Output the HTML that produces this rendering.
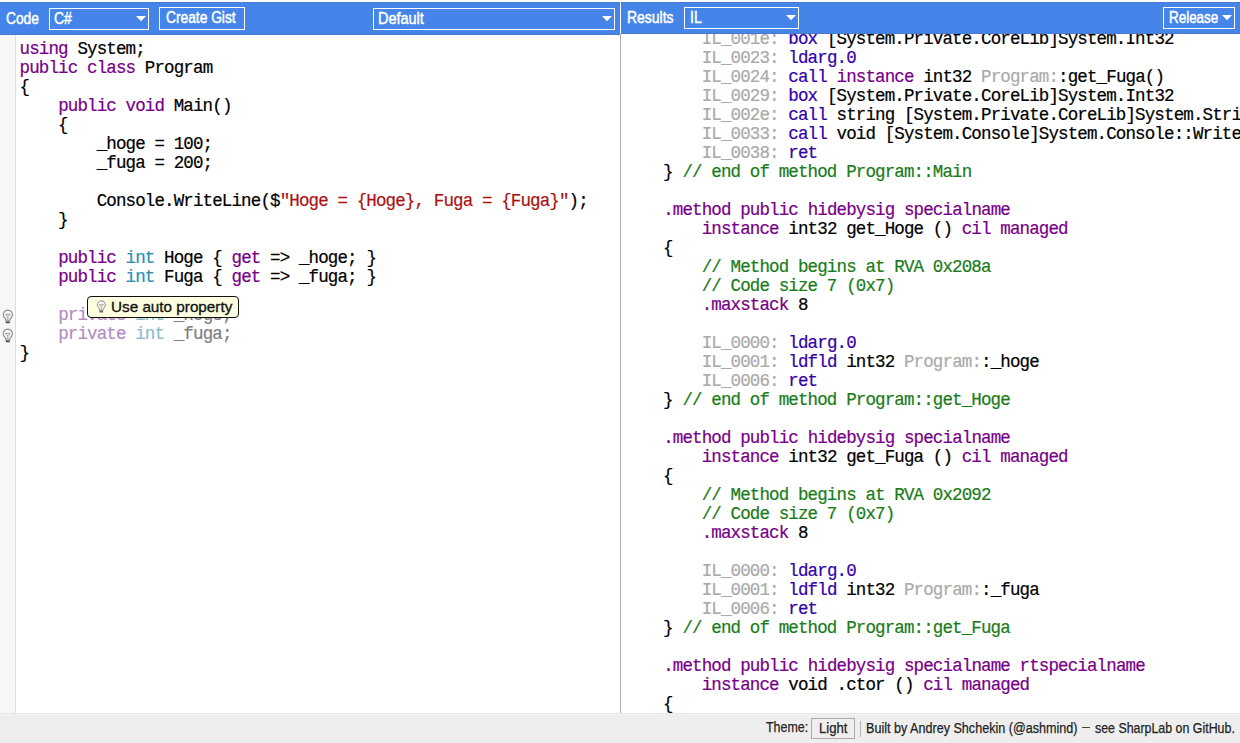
<!DOCTYPE html>
<html><head><meta charset="utf-8">
<style>
html,body{margin:0;padding:0;}
body{width:1240px;height:743px;overflow:hidden;position:relative;background:#fff;font-family:"Liberation Sans",sans-serif;}
.abs{position:absolute;}
.hdrL{left:0;top:2px;width:620px;height:33px;background:#4585ea;box-shadow:inset 0 1px 0 #4a7bd2,inset 0 -1px 0 #4a78cc;}
.hdrR{left:621px;top:2px;width:619px;height:32px;background:#4585ea;box-shadow:inset 0 1px 0 #4a7bd2,inset 0 -1px 0 #4a78cc;}
.divc{left:620px;top:34px;width:1px;height:679px;background:#aaa;}
.gut{left:0;top:35px;width:15px;height:678px;background:#f7f7f7;border-right:1px solid #ddd;}
.foot{left:0;top:713px;width:1240px;height:30px;background:#eee;}
.lbl{color:#fff;font-size:17px;-webkit-text-stroke:0.5px #fff;white-space:nowrap;transform-origin:0 0;}
.box{border:1px solid #fff;box-sizing:border-box;}
.tri{width:0;height:0;border-left:4.5px solid transparent;border-right:4.5px solid transparent;border-top:5px solid #fff;}
pre{margin:0;font-family:"Liberation Mono",monospace;font-size:17.5px;letter-spacing:-0.87px;line-height:19px;-webkit-text-stroke:0.2px currentColor;color:#000;white-space:pre;}
.k{color:#708;}
.t{color:#2b91af;}
.s{color:#a11;}
.b{color:#30a;}
.c{color:#187c18;}
.g{color:#aaa;}
.dim{color:#808080;}.dim .k{color:#b38cc2;}.dim .t{color:#8dbccd;}
.ft{font-size:15px;color:#222;-webkit-text-stroke:0.25px #222;white-space:nowrap;transform-origin:0 0;}
.tip{box-sizing:border-box;border:1px solid #111;border-radius:4px;background:#fdfddf;}
</style></head><body>
<div class="abs hdrL"></div>
<div class="abs hdrR"></div>
<div class="abs divc"></div>
<div class="abs gut"></div>

<svg class="abs" style="left:0;top:307.5px" width="16" height="17" viewBox="0 0 16 17"><g fill="none" stroke="#8a8a8a" stroke-width="1.1"><path d="M5.4,10.6 A4.6,4.6 0 1 1 10.2,10.6 L9.6,13.2 H6 Z" fill="#f4f4f4"/><path d="M5.5,6.4 H10.1 L7.8,8.9 Z M7.8,8.9 V12.2" stroke="#9a9a9a" stroke-width="0.9"/><path d="M6.2,12.4 H9.4" stroke="#999" stroke-width="0.8"/></g><rect x="5.8" y="13.8" width="4" height="1.4" fill="#444"/></svg>
<svg class="abs" style="left:0;top:326.5px" width="16" height="17" viewBox="0 0 16 17"><g fill="none" stroke="#8a8a8a" stroke-width="1.1"><path d="M5.4,10.6 A4.6,4.6 0 1 1 10.2,10.6 L9.6,13.2 H6 Z" fill="#f4f4f4"/><path d="M5.5,6.4 H10.1 L7.8,8.9 Z M7.8,8.9 V12.2" stroke="#9a9a9a" stroke-width="0.9"/><path d="M6.2,12.4 H9.4" stroke="#999" stroke-width="0.8"/></g><rect x="5.8" y="13.8" width="4" height="1.4" fill="#444"/></svg>
<!-- header left -->
<div class="abs lbl" style="left:5.9px;top:9px;transform:scaleX(.81)">Code</div>
<div class="abs box" style="left:49px;top:8px;width:100px;height:22px;"></div>
<div class="abs lbl" style="left:53.9px;top:9px;transform:scaleX(.82)">C#</div>
<svg class="abs" style="left:136px;top:16px" width="10" height="6"><polygon points="0,0 10,0 5,5.3" fill="#fff"/></svg>
<div class="abs box" style="left:159px;top:7px;width:86px;height:23px;"></div>
<div class="abs lbl" style="left:166.1px;top:8px;transform:scaleX(.81)">Create Gist</div>
<div class="abs box" style="left:373px;top:8px;width:242px;height:22px;"></div>
<div class="abs lbl" style="left:378.2px;top:9px;transform:scaleX(.85)">Default</div>
<svg class="abs" style="left:602px;top:16px" width="10" height="6"><polygon points="0,0 10,0 5,5.3" fill="#fff"/></svg>

<!-- header right -->
<div class="abs lbl" style="left:627.1px;top:8px;transform:scaleX(.82)">Results</div>
<div class="abs box" style="left:684px;top:7px;width:115px;height:22px;"></div>
<div class="abs lbl" style="left:689.7px;top:8px;transform:scaleX(.83)">IL</div>
<svg class="abs" style="left:786px;top:15px" width="10" height="6"><polygon points="0,0 10,0 5,5.3" fill="#fff"/></svg>
<div class="abs box" style="left:1163px;top:7px;width:72px;height:22px;"></div>
<div class="abs lbl" style="left:1168.9px;top:8px;transform:scaleX(.79)">Release</div>
<svg class="abs" style="left:1222px;top:15px" width="10" height="6"><polygon points="0,0 10,0 5,5.3" fill="#fff"/></svg>

<!-- left code -->
<pre class="abs" id="codeL" style="left:19.6px;top:39.7px;"><span class="k">using</span> System;
<span class="k">public</span> <span class="k">class</span> Program
{
    <span class="k">public</span> <span class="k">void</span> Main()
    {
        _hoge = 100;
        _fuga = 200;

        Console.WriteLine($<span class="s">"Hoge = {Hoge}, Fuga = {Fuga}"</span>);
    }

    <span class="k">public</span> <span class="t">int</span> Hoge { <span class="k">get</span> =&gt; _hoge; }
    <span class="k">public</span> <span class="t">int</span> Fuga { <span class="k">get</span> =&gt; _fuga; }

<span class="dim">    <span class="k">private</span> <span class="t">int</span> _hoge;</span>
<span class="dim">    <span class="k">private</span> <span class="t">int</span> _fuga;</span>
}</pre>

<!-- right code -->
<div class="abs" style="left:621px;top:34px;width:619px;height:679px;overflow:hidden;"><pre class="abs" id="codeR" style="left:3.6px;top:-4.3px;">        <span class="g">IL_001e:</span> <span class="b">box</span> [System.Private.CoreLib]System.Int32
        <span class="g">IL_0023:</span> <span class="b">ldarg.0</span>
        <span class="g">IL_0024:</span> <span class="b">call</span> <span class="k">instance</span> int32 <span class="g">Program:</span>:get_Fuga()
        <span class="g">IL_0029:</span> <span class="b">box</span> [System.Private.CoreLib]System.Int32
        <span class="g">IL_002e:</span> <span class="b">call</span> string [System.Private.CoreLib]System.String::Format(string, object, object)
        <span class="g">IL_0033:</span> <span class="b">call</span> void [System.Console]System.Console::WriteLine(string)
        <span class="g">IL_0038:</span> <span class="b">ret</span>
    } <span class="c">// end of method Program::Main</span>

    <span class="k">.method</span> <span class="k">public</span> <span class="k">hidebysig</span> <span class="k">specialname</span>
        <span class="k">instance</span> int32 get_Hoge () <span class="k">cil</span> <span class="k">managed</span>
    {
        <span class="c">// Method begins at RVA 0x208a</span>
        <span class="c">// Code size 7 (0x7)</span>
        <span class="k">.maxstack</span> 8

        <span class="g">IL_0000:</span> <span class="b">ldarg.0</span>
        <span class="g">IL_0001:</span> <span class="b">ldfld</span> int32 <span class="g">Program:</span>:_hoge
        <span class="g">IL_0006:</span> <span class="b">ret</span>
    } <span class="c">// end of method Program::get_Hoge</span>

    <span class="k">.method</span> <span class="k">public</span> <span class="k">hidebysig</span> <span class="k">specialname</span>
        <span class="k">instance</span> int32 get_Fuga () <span class="k">cil</span> <span class="k">managed</span>
    {
        <span class="c">// Method begins at RVA 0x2092</span>
        <span class="c">// Code size 7 (0x7)</span>
        <span class="k">.maxstack</span> 8

        <span class="g">IL_0000:</span> <span class="b">ldarg.0</span>
        <span class="g">IL_0001:</span> <span class="b">ldfld</span> int32 <span class="g">Program:</span>:_fuga
        <span class="g">IL_0006:</span> <span class="b">ret</span>
    } <span class="c">// end of method Program::get_Fuga</span>

    <span class="k">.method</span> <span class="k">public</span> <span class="k">hidebysig</span> <span class="k">specialname</span> <span class="k">rtspecialname</span>
        <span class="k">instance</span> void .ctor () <span class="k">cil</span> <span class="k">managed</span>
    {
        <span class="c">// Method begins at RVA 0x209a</span></pre></div>

<div class="abs foot"></div>
<div class="abs" style="left:0;top:713px;width:1240px;height:1px;background:#e6e6e6;"></div>
<div class="abs" style="left:0;top:714px;width:1240px;height:1px;background:#f3f3f3;"></div>
<div class="abs ft" style="left:765.8px;top:718.3px;transform:scaleX(.828)">Theme:</div>
<div class="abs" style="left:811px;top:718px;width:44px;height:21px;box-sizing:border-box;border:1px solid #aaa;"></div>
<div class="abs ft" style="left:819px;top:718.5px;transform:scaleX(.877)">Light</div>
<div class="abs" style="left:860px;top:721px;width:1px;height:16px;background:#b5b5b5;"></div>
<div class="abs ft" style="left:866.4px;top:719.2px;transform:scaleX(.839)">Built by Andrey Shchekin (@ashmind)</div>
<div class="abs" style="left:1082px;top:727.2px;width:8.4px;height:1.2px;background:#444;"></div>
<div class="abs ft" style="left:1094.9px;top:719.2px;transform:scaleX(.826)">see SharpLab on GitHub.</div>
<div class="abs tip" style="left:87px;top:296px;width:152px;height:22px;"></div>
<svg class="abs" style="left:94px;top:299px" width="15" height="15" viewBox="0 0 16 17"><g fill="none" stroke="#8a8a8a" stroke-width="1.1"><path d="M5.4,10.6 A4.6,4.6 0 1 1 10.2,10.6 L9.6,13.2 H6 Z" fill="#f8f8f0"/><path d="M5.5,6.4 H10.1 L7.8,8.9 Z M7.8,8.9 V12.2" stroke="#9a9a9a" stroke-width="0.9"/><path d="M6.2,12.4 H9.4" stroke="#999" stroke-width="0.8"/></g><rect x="5.8" y="13.8" width="4" height="1.4" fill="#444"/></svg>
<div class="abs ft" style="left:111.1px;top:299px;font-size:14px;color:#111;-webkit-text-stroke:0.3px #111;transform:scaleX(1.09)">Use auto property</div>

</body></html>
